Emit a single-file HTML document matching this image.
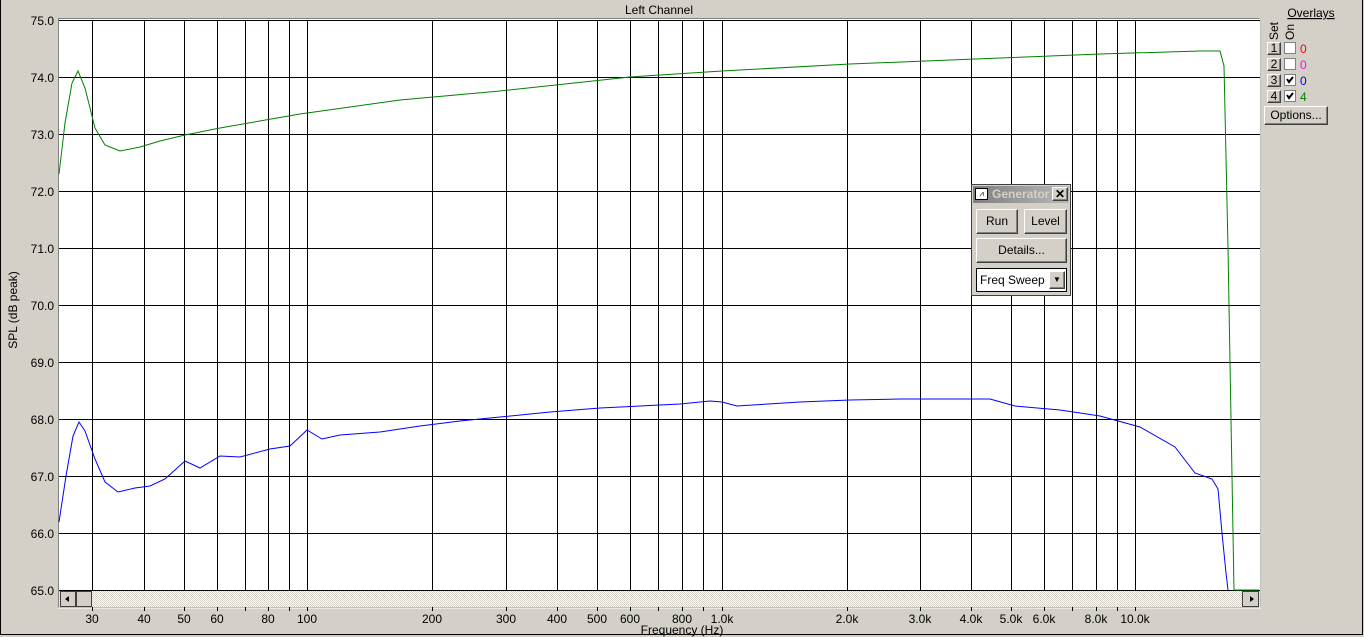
<!DOCTYPE html>
<html><head><meta charset="utf-8"><style>
body{margin:0;width:1364px;height:637px;background:#d4d0c8;overflow:hidden;font-family:"Liberation Sans",Arial,sans-serif;position:relative}
.t{position:absolute;font-size:12px;color:#000;white-space:nowrap}
.btn{position:absolute;background:#d4d0c8;border:1px solid;border-color:#fff #404040 #404040 #fff;box-shadow:inset -1px -1px #808080;font-size:12px;text-align:center;box-sizing:border-box}
</style></head><body>
<div style="position:absolute;left:0;top:0;width:1363px;height:635px;border-left:1px solid #000;border-bottom:1px solid #000;border-right:1px solid #000;box-sizing:border-box"></div>
<svg width="1364" height="637" style="position:absolute;left:0;top:0" font-family="Liberation Sans,Arial,sans-serif" font-size="12">
<rect x="58" y="18" width="1203" height="590" fill="#808080"/>
<rect x="59" y="19" width="1201" height="588" fill="#fff"/>
<line x1="1260" y1="18" x2="1260" y2="608" stroke="#fff"/>
<line x1="58" y1="608" x2="1261" y2="608" stroke="#fff"/>
<text x="659" y="14" text-anchor="middle">Left Channel</text>
<g stroke="#000" stroke-width="1">
<path d="M59 20.5H1260M59 77.5H1260M59 134.5H1260M59 191.5H1260M59 248.5H1260M59 305.5H1260M59 362.5H1260M59 419.5H1260M59 476.5H1260M59 533.5H1260M59 590.5H1260"/>
<path d="M92.5 20V590M144.5 20V590M184.5 20V590M217.5 20V590M245.5 20V590M268.5 20V590M289.5 20V590M307.5 20V590M432.5 20V590M506.5 20V590M557.5 20V590M597.5 20V590M630.5 20V590M658.5 20V590M682.5 20V590M703.5 20V590M722.5 20V590M847.5 20V590M920.5 20V590M971.5 20V590M1011.5 20V590M1044.5 20V590M1072.5 20V590M1096.5 20V590M1117.5 20V590M1135.5 20V590"/>
<path d="M92.5 607v4M144.5 607v4M184.5 607v4M217.5 607v4M245.5 607v4M268.5 607v4M289.5 607v4M307.5 607v4M432.5 607v4M506.5 607v4M557.5 607v4M597.5 607v4M630.5 607v4M658.5 607v4M682.5 607v4M703.5 607v4M722.5 607v4M847.5 607v4M920.5 607v4M971.5 607v4M1011.5 607v4M1044.5 607v4M1072.5 607v4M1096.5 607v4M1117.5 607v4M1135.5 607v4"/>
</g>
<g text-anchor="end">
<text x="54" y="25">75.0</text><text x="54" y="82">74.0</text><text x="54" y="139">73.0</text><text x="54" y="196">72.0</text><text x="54" y="253">71.0</text><text x="54" y="310">70.0</text><text x="54" y="367">69.0</text><text x="54" y="424">68.0</text><text x="54" y="481">67.0</text><text x="54" y="538">66.0</text><text x="54" y="595">65.0</text>
</g>
<text transform="translate(17,310) rotate(-90)" text-anchor="middle">SPL (dB peak)</text>
<g text-anchor="middle">
<text x="92" y="623">30</text><text x="144" y="623">40</text><text x="184" y="623">50</text><text x="217" y="623">60</text><text x="268" y="623">80</text><text x="307" y="623">100</text><text x="432" y="623">200</text><text x="506" y="623">300</text><text x="557" y="623">400</text><text x="597" y="623">500</text><text x="630" y="623">600</text><text x="682" y="623">800</text><text x="722" y="623">1.0k</text><text x="847" y="623">2.0k</text><text x="920" y="623">3.0k</text><text x="971" y="623">4.0k</text><text x="1011" y="623">5.0k</text><text x="1044" y="623">6.0k</text><text x="1096" y="623">8.0k</text><text x="1135" y="623">10.0k</text>
<text x="682" y="634">Frequency (Hz)</text>
</g>
<defs><pattern id="h" width="2" height="2" patternUnits="userSpaceOnUse"><rect width="2" height="2" fill="#fff"/><rect width="1" height="1" fill="#d4d0c8"/><rect x="1" y="1" width="1" height="1" fill="#d4d0c8"/></pattern></defs>
<rect x="59" y="591" width="1201" height="16" fill="url(#h)"/>
<g fill="#d4d0c8" stroke="#404040"><rect x="60.5" y="591.5" width="15" height="15"/><rect x="76.5" y="591.5" width="15" height="15"/><rect x="1242.5" y="591.5" width="16" height="15"/></g>
<path d="M65 599l4-3v6zM1254 599l-4-3v6z" fill="#000"/>
<polyline fill="none" stroke="#008000" points="59,174 65,123 72,83 78,71 85,88 95,128 105,145 120,151 140,147 160,141 185,135 220,128 300,114 400,100 500,91 630,77 722,71 850,64 1000,58 1100,54 1200,51 1220,51 1224,66 1228,248 1231,419 1233,533 1234,590 1259,590"/>
<polyline fill="none" stroke="#0000ff" points="59,522 66,476 73,436 79,422 85,431 95,459 105,482 118,492 135,488 150,486 165,479 185,461 200,468 220,456 240,457 270,449 290,446 307,430 322,439 340,435 380,432 420,426 460,421 500,417 550,412 600,408 680,404 710,401 722,402 737,406 800,402 850,400 900,399 990,399 1015,406 1060,410 1100,416 1140,427 1175,447 1195,473 1212,479 1218,489 1222,533 1226,573 1228,590"/>
<text x="1311" y="17" text-anchor="middle" text-decoration="underline">Overlays</text>
<text transform="translate(1278,40) rotate(-90)">Set</text>
<text transform="translate(1294,40) rotate(-90)">On</text>
<g fill="#fff" stroke="#808080"><rect x="1284.5" y="42.5" width="11" height="11"/><rect x="1284.5" y="58.5" width="11" height="11"/><rect x="1284.5" y="74.5" width="11" height="11"/><rect x="1284.5" y="90.5" width="11" height="11"/></g>
<path d="M1287 79l2 3 4-5M1287 95l2 3 4-5" stroke="#000" stroke-width="2" fill="none"/>
<text x="1300" y="53" fill="#ff0000">0</text><text x="1300" y="69" fill="#ff00ff">0</text><text x="1300" y="85" fill="#0000ff">0</text><text x="1300" y="101" fill="#008000">4</text>
</svg>
<div class="btn" style="left:1267px;top:42px;width:14px;height:13px;line-height:11px">1</div>
<div class="btn" style="left:1267px;top:58px;width:14px;height:13px;line-height:11px">2</div>
<div class="btn" style="left:1267px;top:74px;width:14px;height:13px;line-height:11px">3</div>
<div class="btn" style="left:1267px;top:90px;width:14px;height:13px;line-height:11px">4</div>
<div class="btn" style="left:1264px;top:106px;width:64px;height:19px;line-height:17px">Options...</div>
<div style="position:absolute;left:971px;top:184px;width:100px;height:112px;background:#d4d0c8;border:1px solid #404040;box-sizing:border-box">
<div style="position:absolute;left:1px;top:1px;width:96px;height:17px;background:linear-gradient(90deg,#808080,#b8b8b8);"></div>
<div style="position:absolute;left:3px;top:3px;width:13px;height:12px;background:#fff;border:1px solid #000;box-sizing:border-box;font-size:8px;line-height:10px;text-align:center">⩘</div>
<div style="position:absolute;left:20px;top:2px;font-size:12px;font-weight:bold;color:#d4d0c8">Generator</div>
<div class="btn" style="left:80px;top:2px;width:16px;height:14px;line-height:12px;font-weight:bold">✕</div>
<div class="btn" style="left:4px;top:24px;width:42px;height:25px;line-height:23px">Run</div>
<div class="btn" style="left:52px;top:24px;width:43px;height:25px;line-height:23px">Level</div>
<div class="btn" style="left:4px;top:53px;width:91px;height:25px;line-height:23px">Details...</div>
<div style="position:absolute;left:4px;top:83px;width:91px;height:24px;background:#fff;border:1px solid #000;box-sizing:border-box;font-size:12px;line-height:22px;padding-left:3px">Freq Sweep
<div class="btn" style="left:72px;top:2px;width:16px;height:18px;line-height:16px;font-size:8px">▼</div></div>
</div>
</body></html>
